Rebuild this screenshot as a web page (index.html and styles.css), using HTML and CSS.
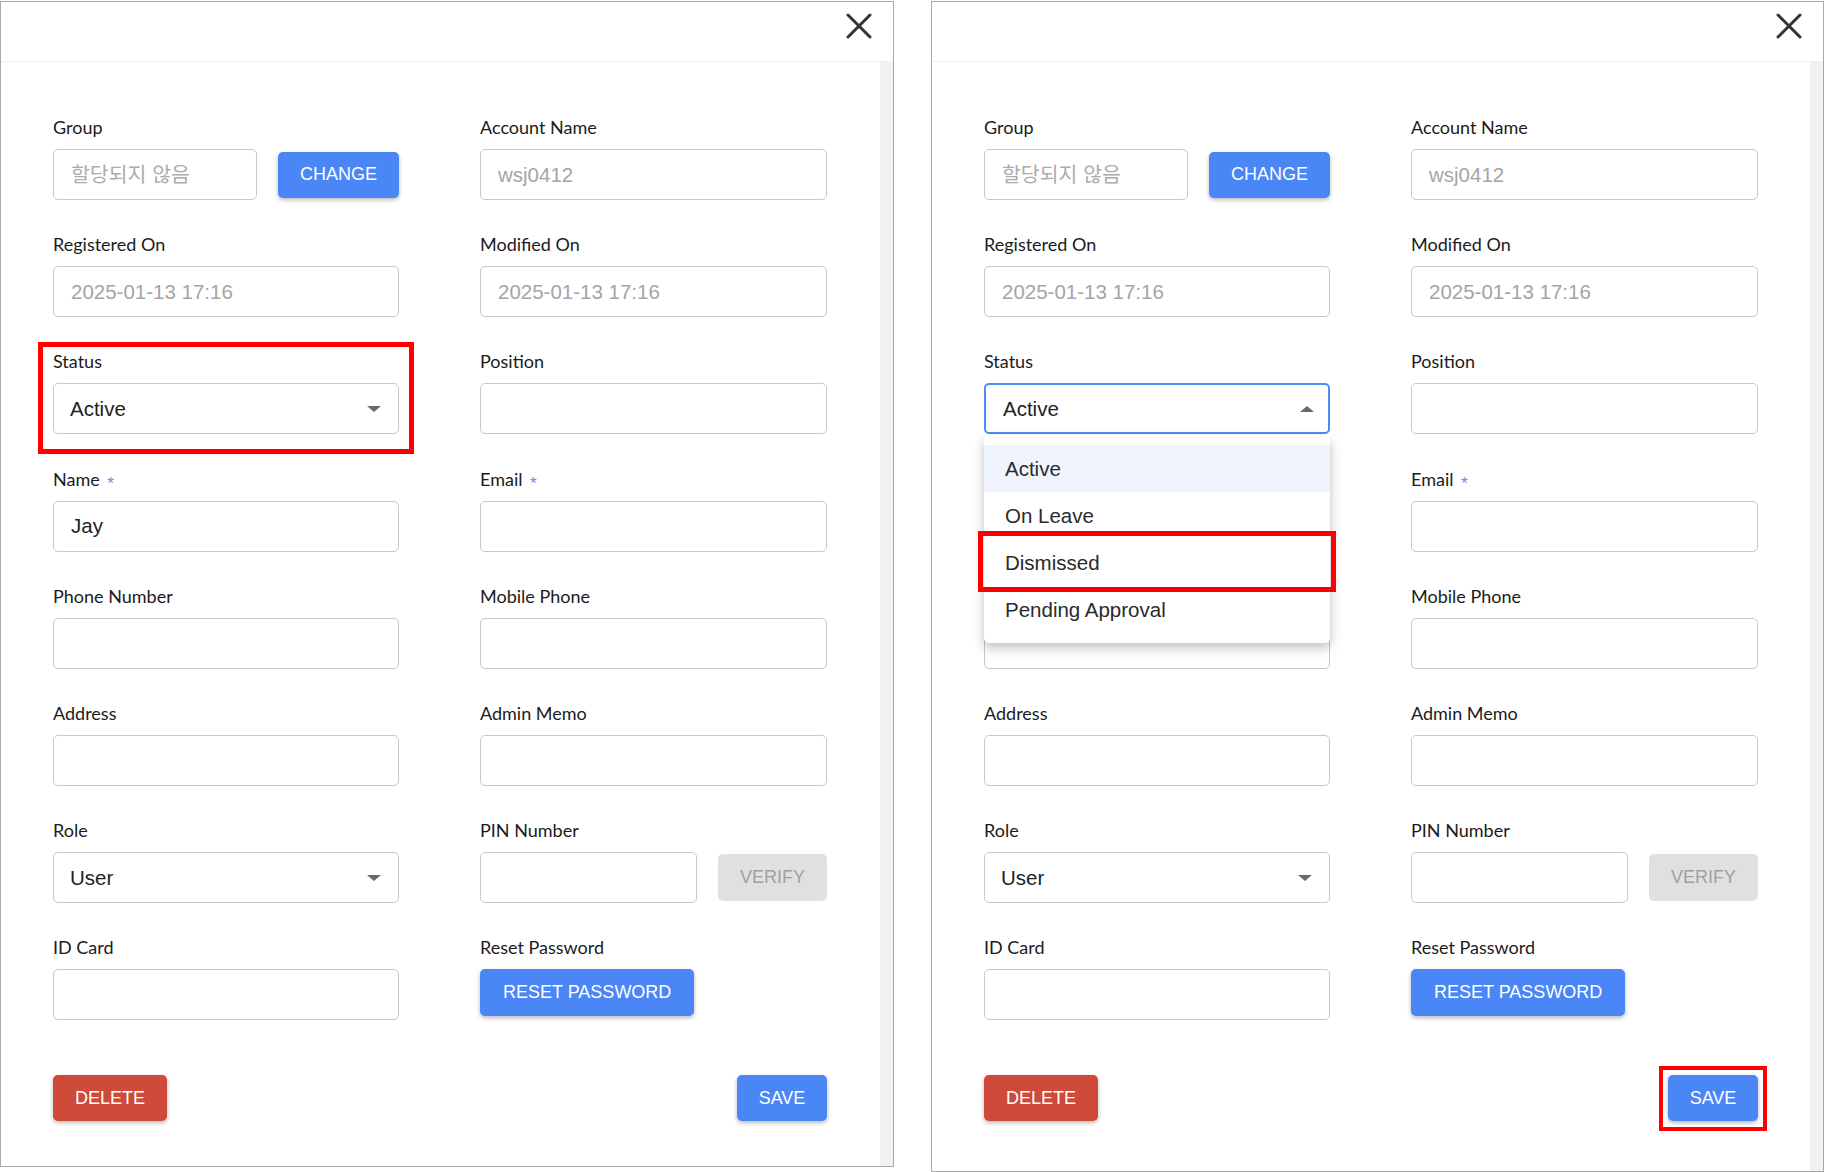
FILE: index.html
```html
<!DOCTYPE html>
<html lang="en">
<head>
  <meta charset="UTF-8">
  <meta name="viewport" content="width=device-width, initial-scale=1.0">
  <title>Edit User</title>
  <link rel="stylesheet" href="styles.css">
</head>
<body>
  <div class="page">
    <!-- Before: status field closed -->
    <div class="modal">
      <div class="modal-header">
        <button class="close-btn" aria-label="Close">
          <svg width="26" height="26" viewBox="0 0 26 26"><path d="M2 2L24 24M24 2L2 24" stroke="#333" stroke-width="3" stroke-linecap="round"/></svg>
        </button>
      </div>
      <div class="modal-main">
        <div class="modal-body">
          <div class="form-grid">
            <div class="field">
              <label class="field-label">Group</label>
              <div class="inline-row">
                <input class="input" placeholder="할당되지 않음">
                <button class="btn btn-change">CHANGE</button>
              </div>
            </div>
            <div class="field">
              <label class="field-label">Account Name</label>
              <input class="input" value="wsj0412" disabled>
            </div>

            <div class="field">
              <label class="field-label">Registered On</label>
              <input class="input" value="2025-01-13 17:16" disabled>
            </div>
            <div class="field">
              <label class="field-label">Modified On</label>
              <input class="input" value="2025-01-13 17:16" disabled>
            </div>

            <div class="field field-marked">
              <label class="field-label">Status</label>
              <div class="select">
                <span>Active</span>
                <span class="caret"></span>
              </div>
              <div class="mark mark-status"></div>
            </div>
            <div class="field">
              <label class="field-label">Position</label>
              <input class="input">
            </div>

            <div class="field">
              <label class="field-label">Name <span class="required">*</span></label>
              <input class="input" value="Jay">
            </div>
            <div class="field">
              <label class="field-label">Email <span class="required">*</span></label>
              <input class="input">
            </div>

            <div class="field">
              <label class="field-label">Phone Number</label>
              <input class="input">
            </div>
            <div class="field">
              <label class="field-label">Mobile Phone</label>
              <input class="input">
            </div>

            <div class="field">
              <label class="field-label">Address</label>
              <input class="input">
            </div>
            <div class="field">
              <label class="field-label">Admin Memo</label>
              <input class="input">
            </div>

            <div class="field">
              <label class="field-label">Role</label>
              <div class="select">
                <span>User</span>
                <span class="caret"></span>
              </div>
            </div>
            <div class="field">
              <label class="field-label">PIN Number</label>
              <div class="inline-row">
                <input class="input">
                <button class="btn btn-verify" disabled>VERIFY</button>
              </div>
            </div>

            <div class="field">
              <label class="field-label">ID Card</label>
              <input class="input">
            </div>
            <div class="field">
              <label class="field-label">Reset Password</label>
              <div>
                <button class="btn btn-tall">RESET PASSWORD</button>
              </div>
            </div>
          </div>

          <div class="modal-footer">
            <button class="btn btn-danger">DELETE</button>
            <button class="btn btn-save">SAVE</button>
          </div>
        </div>
        <div class="scroll-track"></div>
      </div>
    </div>

    <!-- After: status dropdown open -->
    <div class="modal modal-second">
      <div class="modal-header">
        <button class="close-btn" aria-label="Close">
          <svg width="26" height="26" viewBox="0 0 26 26"><path d="M2 2L24 24M24 2L2 24" stroke="#333" stroke-width="3" stroke-linecap="round"/></svg>
        </button>
      </div>
      <div class="modal-main">
        <div class="modal-body">
          <div class="form-grid">
            <div class="field">
              <label class="field-label">Group</label>
              <div class="inline-row">
                <input class="input" placeholder="할당되지 않음">
                <button class="btn btn-change">CHANGE</button>
              </div>
            </div>
            <div class="field">
              <label class="field-label">Account Name</label>
              <input class="input" value="wsj0412" disabled>
            </div>

            <div class="field">
              <label class="field-label">Registered On</label>
              <input class="input" value="2025-01-13 17:16" disabled>
            </div>
            <div class="field">
              <label class="field-label">Modified On</label>
              <input class="input" value="2025-01-13 17:16" disabled>
            </div>

            <div class="field field-open">
              <label class="field-label">Status</label>
              <div class="select open">
                <span>Active</span>
                <span class="caret"></span>
              </div>
              <div class="menu">
                <div class="menu-item active">Active</div>
                <div class="menu-item">On Leave</div>
                <div class="menu-item">Dismissed<div class="mark mark-option"></div></div>
                <div class="menu-item">Pending Approval</div>
              </div>
            </div>
            <div class="field">
              <label class="field-label">Position</label>
              <input class="input">
            </div>

            <div class="field">
              <label class="field-label">Name <span class="required">*</span></label>
              <input class="input" value="Jay">
            </div>
            <div class="field">
              <label class="field-label">Email <span class="required">*</span></label>
              <input class="input">
            </div>

            <div class="field">
              <label class="field-label">Phone Number</label>
              <input class="input">
            </div>
            <div class="field">
              <label class="field-label">Mobile Phone</label>
              <input class="input">
            </div>

            <div class="field">
              <label class="field-label">Address</label>
              <input class="input">
            </div>
            <div class="field">
              <label class="field-label">Admin Memo</label>
              <input class="input">
            </div>

            <div class="field">
              <label class="field-label">Role</label>
              <div class="select">
                <span>User</span>
                <span class="caret"></span>
              </div>
            </div>
            <div class="field">
              <label class="field-label">PIN Number</label>
              <div class="inline-row">
                <input class="input">
                <button class="btn btn-verify" disabled>VERIFY</button>
              </div>
            </div>

            <div class="field">
              <label class="field-label">ID Card</label>
              <input class="input">
            </div>
            <div class="field">
              <label class="field-label">Reset Password</label>
              <div>
                <button class="btn btn-tall">RESET PASSWORD</button>
              </div>
            </div>
          </div>

          <div class="modal-footer">
            <button class="btn btn-danger">DELETE</button>
            <div class="btn-wrap">
              <button class="btn btn-save">SAVE</button>
              <div class="mark mark-save"></div>
            </div>
          </div>
        </div>
        <div class="scroll-track"></div>
      </div>
    </div>
  </div>
</body>
</html>
```

FILE: styles.css
```css
/* Base styles */
*, *::before, *::after {
  box-sizing: border-box;
}

body {
  margin: 0;
  padding-top: 1px;
  background: #fff;
  font-family: Lato, "Liberation Sans", sans-serif;
  color: #1b1b1b;
}

.page {
  display: flex;
  align-items: flex-start;
  gap: 37px;
}

/* Modal */
.modal {
  width: 894px;
  height: 1166px;
  border: 1px solid #a8a8a8;
  background: #fff;
  display: flex;
  flex-direction: column;
}

.modal-second {
  width: 893px;
  height: 1171px;
}

.modal-header {
  height: 60px;
  flex-shrink: 0;
  border-bottom: 1px solid #efefef;
  display: flex;
  justify-content: flex-end;
  align-items: flex-start;
  padding: 11px 21px 0 0;
}

.close-btn {
  width: 26px;
  height: 26px;
  padding: 0;
  border: none;
  background: none;
  cursor: pointer;
}

.close-btn svg {
  display: block;
}

.modal-main {
  flex: 1;
  display: flex;
  min-height: 0;
}

.modal-body {
  flex: 1;
  padding: 55px 0 0 52px;
}

.scroll-track {
  width: 13px;
  background: #f1f1f1;
}

/* Form grid */
.form-grid {
  width: 774px;
  display: grid;
  grid-template-columns: 346px 347px;
  grid-auto-rows: 83px;
  column-gap: 81px;
  row-gap: 34.2px;
}

.field-label {
  display: block;
  height: 20px;
  font-size: 18px;
  line-height: 20px;
  margin-bottom: 12px;
}

.required {
  color: #5b8ef3;
  font: 17px "Liberation Sans", sans-serif;
  line-height: 0;
  margin-left: 3px;
  vertical-align: -3px;
}

.input {
  display: block;
  width: 100%;
  height: 51px;
  padding: 0 17px;
  border: 1px solid #c8c8c8;
  border-radius: 5px;
  background: #fff;
  font: 20.5px "Liberation Sans", "Noto Sans CJK KR", sans-serif;
  color: #222;
  outline: none;
}

.input:disabled {
  background: #fff;
  color: #a5a5a5;
}

.input::placeholder {
  color: #acacac;
}

.inline-row {
  display: flex;
  align-items: center;
  gap: 21px;
}

.inline-row .input {
  flex: 1;
  min-width: 0;
}

/* Select */
.select {
  height: 51px;
  display: flex;
  align-items: center;
  padding: 0 17px 0 16px;
  border: 1px solid #c8c8c8;
  border-radius: 5px;
  font: 20.5px "Liberation Sans", sans-serif;
  color: #222;
  cursor: pointer;
}

.caret {
  margin-left: auto;
  width: 0;
  height: 0;
  border-left: 7px solid transparent;
  border-right: 7px solid transparent;
  border-top: 6px solid #6a6a6a;
}

.select.open {
  border: 2px solid #4f8bf5;
  padding: 0 14px 0 17px;
}

.select.open .caret {
  border-top: none;
  border-bottom: 6px solid #6a6a6a;
}

.field-open {
  position: relative;
  z-index: 3;
}

.menu {
  position: absolute;
  top: calc(100% + 1px);
  left: 0;
  right: 0;
  padding: 10px 0;
  background: #fff;
  border-radius: 5px;
  box-shadow: 0 5px 12px rgba(0,0,0,0.25);
}

.menu-item {
  position: relative;
  height: 47px;
  display: flex;
  align-items: center;
  padding-left: 21px;
  font: 20.5px "Liberation Sans", sans-serif;
  color: #2a2a2a;
}

.menu-item.active {
  background: #eff4fd;
}

/* Buttons */
.btn {
  height: 46px;
  padding: 0 22px;
  border: none;
  border-radius: 5px;
  background: #4a86f6;
  color: #fff;
  font: 18px "Liberation Sans", sans-serif;
  box-shadow: 0 2px 4px rgba(0,0,0,0.28);
  cursor: pointer;
}

.btn-change {
  width: 121px;
  padding: 0;
  flex-shrink: 0;
}

.btn-verify {
  width: 109px;
  height: 47px;
  padding: 0;
  flex-shrink: 0;
  background: #e0e0e0;
  color: #a0a0a0;
  box-shadow: none;
  cursor: default;
}

.btn-tall {
  height: 47px;
  padding: 0 23px;
}

.btn-danger {
  background: #cf4a38;
}

.btn-save {
  width: 90px;
  padding: 0;
}

.modal-footer {
  width: 774px;
  display: flex;
  justify-content: space-between;
  margin-top: 55px;
}

.btn-wrap {
  position: relative;
}

/* Red highlight marks */
.field-marked {
  position: relative;
}

.mark {
  position: absolute;
  border: 5px solid #ff0000;
  pointer-events: none;
}

.mark-status {
  top: -9px;
  left: -15px;
  right: -15px;
  bottom: -20px;
}

.mark-option {
  top: -8px;
  bottom: -6px;
  left: -6px;
  right: -6px;
}

.mark-save {
  top: -9px;
  left: -9px;
  right: -9px;
  bottom: -10px;
  border-width: 4px;
}
```
